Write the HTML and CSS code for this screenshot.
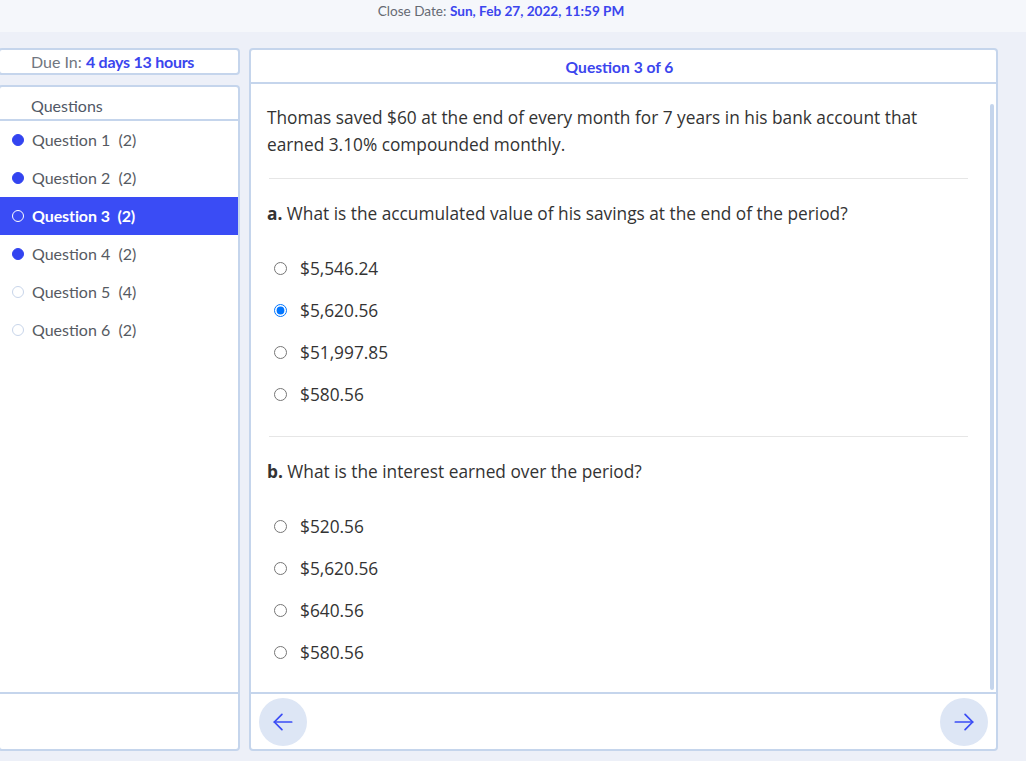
FILE: index.html
```html
<!DOCTYPE html>
<html lang="en">
<head>
<meta charset="utf-8">
<title>Quiz</title>
<link rel="stylesheet" href="styles.css">
</head>
<body>
<header class="topbar">
  <span class="label">Close Date:</span> <span class="value">Sun, Feb 27, 2022, 11:59 PM</span>
</header>
<main class="layout">
  <aside class="sidebar">
    <div class="due box"><span class="label">Due In:</span> <span class="value">4 days 13 hours</span></div>
    <nav class="questions box">
      <div class="q-head">Questions</div>
      <ul class="q-list">
        <li class="q-item"><span class="dot done"></span><span>Question 1&nbsp; (2)</span></li>
        <li class="q-item"><span class="dot done"></span><span>Question 2&nbsp; (2)</span></li>
        <li class="q-item active"><span class="dot"></span><span>Question 3&nbsp; (2)</span></li>
        <li class="q-item"><span class="dot done"></span><span>Question 4&nbsp; (2)</span></li>
        <li class="q-item"><span class="dot"></span><span>Question 5&nbsp; (4)</span></li>
        <li class="q-item"><span class="dot"></span><span>Question 6&nbsp; (2)</span></li>
      </ul>
      <div class="side-foot"></div>
    </nav>
  </aside>
  <section class="panel box">
    <div class="panel-head">Question 3 of 6</div>
    <div class="panel-body">
      <div class="content">
        <p class="stem">Thomas saved $60 at the end of every month for 7 years in his bank account that earned 3.10% compounded monthly.</p>
        <hr class="sep">
        <p class="part"><b>a.</b> What is the accumulated value of his savings at the end of the period?</p>
        <ul class="opts">
          <li><input type="radio" name="a"><span>$5,546.24</span></li>
          <li><input type="radio" name="a" checked><span>$5,620.56</span></li>
          <li><input type="radio" name="a"><span>$51,997.85</span></li>
          <li><input type="radio" name="a"><span>$580.56</span></li>
        </ul>
        <hr class="sep">
        <p class="part"><b>b.</b> What is the interest earned over the period?</p>
        <ul class="opts">
          <li><input type="radio" name="b"><span>$520.56</span></li>
          <li><input type="radio" name="b"><span>$5,620.56</span></li>
          <li><input type="radio" name="b"><span>$640.56</span></li>
          <li><input type="radio" name="b"><span>$580.56</span></li>
        </ul>
      </div>
      <div class="thumb"></div>
    </div>
    <div class="panel-foot">
      <button class="nav-btn" aria-label="Previous">
        <svg width="26" height="26" viewBox="0 0 24 24" fill="none" stroke="currentColor" stroke-width="1.6" stroke-linecap="round" stroke-linejoin="round"><line x1="20" y1="12" x2="4" y2="12"/><polyline points="11 5 4 12 11 19"/></svg>
      </button>
      <button class="nav-btn" aria-label="Next">
        <svg width="26" height="26" viewBox="0 0 24 24" fill="none" stroke="currentColor" stroke-width="1.6" stroke-linecap="round" stroke-linejoin="round"><line x1="4" y1="12" x2="20" y2="12"/><polyline points="13 5 20 12 13 19"/></svg>
      </button>
    </div>
  </section>
</main>
</body>
</html>
```

FILE: styles.css
```css
* { box-sizing: border-box; }
html, body { margin: 0; padding: 0; }
body {
  background: #edf0f8;
  font-family: Lato, "Liberation Sans", sans-serif;
  width: 1026px;
  height: 761px;
  overflow: hidden;
}
.topbar {
  height: 32px;
  background: #f5f7fb;
  text-align: center;
  padding: 3px 24px 0 0;
  font-size: 13.6px;
  line-height: 16px;
}
.label { color: #666a73; }
.value { color: #3b45ee; font-weight: 700; }

.layout {
  display: flex;
  gap: 9px;
  height: 729px;
  padding: 16px 28px 10px 0;
}
.box {
  background: #fff;
  border: 2px solid #c5d5ec;
  border-radius: 4px;
}
.sidebar {
  width: 242px;
  margin-left: -2px;
  display: flex;
  flex-direction: column;
  gap: 10px;
}
.due {
  height: 27px;
  font-size: 16px;
  line-height: 23px;
  padding-left: 31px;
}
.due .label { color: #717680; }
.due .value { font-weight: 700; letter-spacing: -0.25px; }

.questions {
  flex: 1;
  display: flex;
  flex-direction: column;
}
.q-head {
  height: 34px;
  border-bottom: 2px solid #c5d5ec;
  padding-left: 31px;
  font-size: 16px;
  line-height: 37px;
  color: #515866;
}
.q-list {
  list-style: none;
  margin: 0;
  padding: 0;
  flex: 1;
}
.q-item {
  height: 38px;
  display: flex;
  align-items: center;
  gap: 8px;
  padding-left: 12px;
  padding-bottom: 1px;
  font-size: 16px;
  color: #565a62;
}
.dot {
  width: 12px;
  height: 12px;
  border-radius: 50%;
  border: 1px solid #c8d5ea;
  background: #fff;
}
.dot.done {
  background: #3344f0;
  border-color: #3344f0;
}
.q-item.active {
  background: #3a4cf5;
  color: #fff;
  font-weight: 700;
  letter-spacing: -0.1px;
}
.q-item.active .dot {
  background: transparent;
  border-color: #fff;
}
.side-foot {
  height: 57px;
  border-top: 2px solid #c5d5ec;
}

.panel {
  flex: 1;
  display: flex;
  flex-direction: column;
  min-width: 0;
}
.panel-head {
  height: 34px;
  border-bottom: 2px solid #c5d5ec;
  text-align: center;
  padding-right: 8px;
  font-size: 15.6px;
  line-height: 34px;
  color: #3b45ee;
  font-weight: 700;
}
.panel-body {
  flex: 1;
  position: relative;
  overflow: hidden;
}
.content {
  padding: 20px 26px 0 16px;
  font-family: "Open Sans", "Noto Sans", sans-serif;
  font-size: 17.3px;
  color: #333;
}
.stem {
  margin: 0;
  line-height: 27px;
}
.sep {
  border: 0;
  border-top: 1px solid #e6e6e6;
  margin: 20px 2px 21px;
}
.part {
  margin: 0 0 20px;
  line-height: 27px;
}
.part b { font-weight: 700; }
.opts {
  list-style: none;
  margin: 0;
  padding: 0;
}
.opts li {
  height: 42px;
  display: flex;
  align-items: center;
  gap: 13px;
  padding-left: 7px;
}
.opts input {
  margin: 0;
  width: 13px;
  height: 13px;
}
.opts + .sep { margin-top: 21px; }
.thumb {
  position: absolute;
  right: 2px;
  top: 20px;
  width: 4px;
  height: 586px;
  border-radius: 2px;
  background: #c5d5ec;
}
.panel-foot {
  height: 57px;
  border-top: 2px solid #c5d5ec;
  display: flex;
  justify-content: space-between;
  align-items: center;
  padding: 0 8px;
}
.nav-btn {
  width: 48px;
  height: 48px;
  border-radius: 50%;
  border: 0;
  background: #dde6f5;
  color: #3a4cf5;
  display: flex;
  align-items: center;
  justify-content: center;
  padding: 0;
}
```
